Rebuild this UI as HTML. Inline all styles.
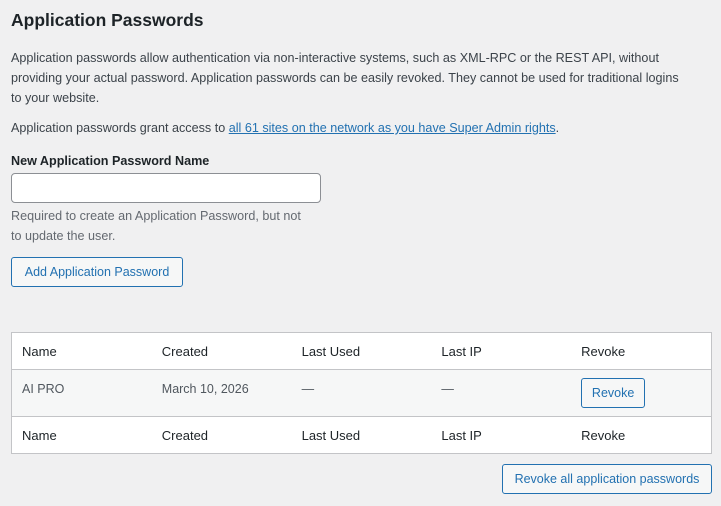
<!DOCTYPE html>
<html><head><style>
body{margin:0;background:#f0f0f1;font-family:"Liberation Sans",sans-serif;font-size:13px;color:#3c434a;width:721px;height:506px;overflow:hidden;position:relative}
.a{position:absolute;white-space:nowrap}
h2{position:absolute;left:11px;top:10px;margin:0;font-size:17.5px;font-weight:600;color:#1d2327}
a{color:#2271b1}
.btn{position:absolute;border:1px solid #2271b1;border-radius:3px;background:#f6f7f7;color:#2271b1;box-sizing:border-box;text-align:center;font-size:12.5px}
table{position:absolute;left:11px;top:332px;width:701px;border:1px solid #c3c4c7;border-collapse:collapse;background:#fff;font-size:13px}
td{padding:0 0 0 10px;height:36px;color:#1d2327;width:130px}
tr.b td{background:#f6f7f7;height:46px;border-top:1px solid #c3c4c7;border-bottom:1px solid #c3c4c7;color:#50575e;font-size:12.5px}
tr.b td span.t{position:relative;top:-4px}
</style></head><body>
<h2>Application Passwords</h2>
<div class="a" style="left:11px;top:48px;line-height:20px;font-size:12.6px">Application passwords allow authentication via non-interactive systems, such as XML-RPC or the REST API, without<br>providing your actual password. Application passwords can be easily revoked. They cannot be used for traditional logins<br>to your website.</div>
<div class="a" style="left:11px;top:120px;font-size:12.6px;line-height:16px">Application passwords grant access to <a href="#">all 61 sites on the network as you have Super Admin rights</a>.</div>
<div class="a" style="left:11px;top:154px;font-weight:600;color:#1d2327;font-size:12.6px">New Application Password Name</div>
<div style="position:absolute;left:11px;top:173px;width:310px;height:30px;box-sizing:border-box;border:1px solid #8c8f94;border-radius:4px;background:#fff"></div>
<div class="a" style="left:11px;top:206px;line-height:20px;color:#646970;font-size:12.6px">Required to create an Application Password, but not<br>to update the user.</div>
<div class="btn" style="left:11px;top:257px;width:172px;height:30px;line-height:28px">Add Application Password</div>
<table>
<tr><td>Name</td><td>Created</td><td>Last Used</td><td>Last IP</td><td>Revoke</td></tr>
<tr class="b"><td><span class="t">AI PRO</span></td><td><span class="t">March 10, 2026</span></td><td><span class="t">—</span></td><td><span class="t">—</span></td><td><span class="btn" style="position:relative;display:inline-block;width:64px;height:30px;line-height:28px">Revoke</span></td></tr>
<tr><td>Name</td><td>Created</td><td>Last Used</td><td>Last IP</td><td>Revoke</td></tr>
</table>
<div class="btn" style="left:502px;top:464px;width:210px;height:30px;line-height:28px">Revoke all application passwords</div>
</body></html>
